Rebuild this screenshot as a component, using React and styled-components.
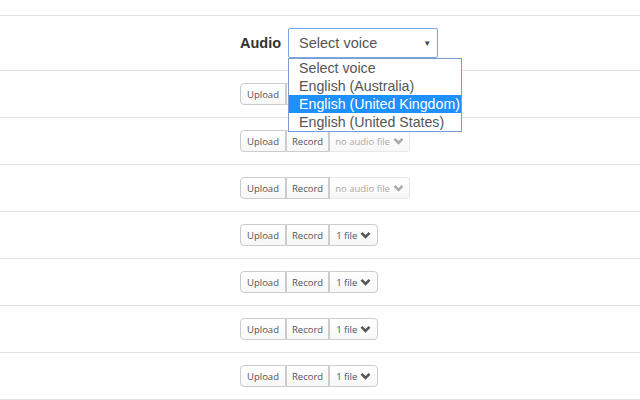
import React from 'react';
import styled, { createGlobalStyle } from 'styled-components';

const GlobalStyle = createGlobalStyle`
  html, body {
    margin: 0;
    padding: 0;
    background: #fff;
    font-family: "Open Sans", "Liberation Sans", Arial, sans-serif;
  }
`;

const Page = styled.div`
  width: 640px;
  height: 400px;
  overflow: hidden;
  padding-top: 15px;
  box-sizing: border-box;
`;

const Row = styled.div`
  display: flex;
  align-items: center;
  box-sizing: border-box;
  height: ${({ $tall }) => ($tall ? '55px' : '47px')};
  padding-left: 240px;
  border-top: 1px solid #e0e0e0;
`;

const Label = styled.span`
  font-family: "Liberation Sans", Arial, sans-serif;
  font-weight: bold;
  font-size: 14.5px;
  color: #333;
  margin-right: 7px;
`;

const SelectWrap = styled.div`
  position: relative;
`;

const SelectBox = styled.div`
  width: 150px;
  height: 30px;
  box-sizing: border-box;
  border: 1px solid #7ea6e2;
  border-radius: 2px;
  display: flex;
  align-items: center;
  justify-content: space-between;
  padding: 0 6px 0 10px;
  font-family: "Liberation Sans", Arial, sans-serif;
  font-size: 14.5px;
  color: #555;
`;

const Arrow = styled.span`
  font-size: 8px;
  color: #444;
`;

const Options = styled.ul`
  position: absolute;
  top: 30px;
  left: 0;
  width: 174px;
  margin: 0;
  padding: 0;
  list-style: none;
  box-sizing: border-box;
  border: 1px solid #7a9cd3;
  background: #fff;
  z-index: 2;
`;

const Option = styled.li`
  height: 18px;
  line-height: 18px;
  padding-left: 10px;
  font-family: "Liberation Sans", Arial, sans-serif;
  font-size: 14.2px;
  white-space: nowrap;
  color: ${({ $active }) => ($active ? '#fff' : '#555')};
  background: ${({ $active }) => ($active ? '#1e90ff' : 'transparent')};
`;

const Group = styled.div`
  display: flex;
  height: 22px;
`;

const Seg = styled.div`
  display: flex;
  align-items: center;
  gap: 3px;
  box-sizing: border-box;
  height: 22px;
  padding: 0 ${({ $pad }) => $pad ?? 6}px;
  font-size: 9.5px;
  color: ${({ $muted, $link }) => ($muted ? '#aaa' : $link ? '#3a5878' : '#555')};
  background: linear-gradient(#fff, #f7f7f7);
  border: 1px solid ${({ $muted }) => ($muted ? '#e8e8e8' : '#ccc')};
  border-left: ${({ $first, $split }) =>
    $first || $split ? '1px solid #ccc' : '0'};
  border-radius: ${({ $first, $last }) =>
    $first ? '4px 0 0 4px' : $last ? '0 4px 4px 0' : '0'};
`;

const Chevron = ({ color }) => (
  <svg width="11" height="8" viewBox="0 0 11 8">
    <polyline points="1.5,1.8 5.5,5.8 9.5,1.8" fill="none" stroke={color} strokeWidth="2.6" />
  </svg>
);

const FileGroup = ({ hasFile }) => (
  <Group>
    <Seg $first>Upload</Seg>
    <Seg $split $pad={5}>Record</Seg>
    {hasFile ? (
      <Seg $last $link $split $pad={6}>
        1 file <Chevron color="#555" />
      </Seg>
    ) : (
      <Seg $last $muted $split $pad={5}>
        no audio file <Chevron color="#aaa" />
      </Seg>
    )}
  </Group>
);

const voices = [
  'Select voice',
  'English (Australia)',
  'English (United Kingdom)',
  'English (United States)',
];

const App = () => (
  <Page>
    <GlobalStyle />
    <Row $tall>
      <Label>Audio</Label>
      <SelectWrap>
        <SelectBox>
          Select voice <Arrow>▼</Arrow>
        </SelectBox>
        <Options>
          {voices.map((v, i) => (
            <Option key={v} $active={i === 2}>{v}</Option>
          ))}
        </Options>
      </SelectWrap>
    </Row>
    {[false, false, false, true, true, true, true].map((f, i) => (
      <Row key={i}>
        <FileGroup hasFile={f} />
      </Row>
    ))}
    <Row />
  </Page>
);

export default App;
